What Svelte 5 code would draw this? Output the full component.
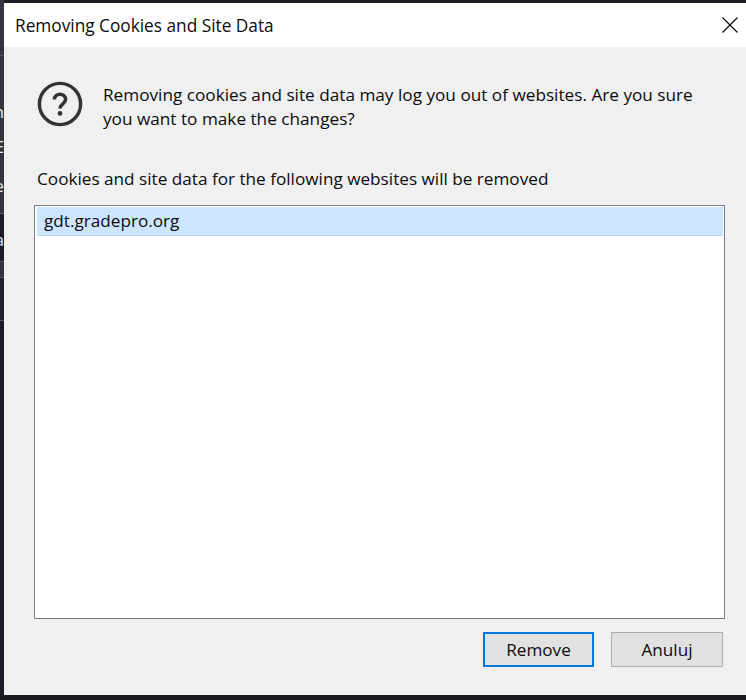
<script>
  const sites = ['gdt.gradepro.org'];
</script>

<div class="desktop">
  <div class="strip" aria-hidden="true">
    <div class="seg top"></div>
    <div class="seg mid">
      <div class="frag f1"><span>n</span></div>
      <div class="frag f2"><span>E</span></div>
      <div class="frag f3"><span>e</span></div>
    </div>
    <div class="seg dark1">
      <div class="frag f4"><span>a</span></div>
    </div>
    <div class="seg grey"></div>
    <div class="seg dark2"></div>
    <div class="seg dark3"></div>
  </div>
  <div class="dialog">
    <header class="titlebar">
      <span class="title">Removing Cookies and Site Data</span>
      <svg class="close" width="16" height="16" viewBox="0 0 16 16" aria-label="Close">
        <path d="M0.5 0.5 L15.5 15.5 M15.5 0.5 L0.5 15.5" stroke="#000" stroke-width="1.1" fill="none" />
      </svg>
    </header>
    <main class="body">
      <div class="question">
        <svg class="qicon" width="46" height="46" viewBox="0 0 46 46">
          <circle cx="23" cy="23" r="20.6" fill="none" stroke="#333" stroke-width="3.4" />
          <path d="M17.4 18.5 C17.4 11.5 28.6 11.5 28.6 18.5 C28.6 22.8 23 22.8 23 27.5" fill="none" stroke="#333" stroke-width="3.5" />
          <circle cx="23" cy="32.4" r="2.4" fill="#333" />
        </svg>
        <p>Removing cookies and site data may log you out of websites. Are you sure you want to make the changes?</p>
      </div>
      <p class="label">Cookies and site data for the following websites will be removed</p>
      <ul class="list">
        {#each sites as site}
          <li>{site}</li>
        {/each}
      </ul>
      <div class="actions">
        <button class="primary">Remove</button>
        <button>Anuluj</button>
      </div>
    </main>
  </div>
</div>

<style>
  :global(body) {
    margin: 0;
    background: #1c1b22;
  }
  .desktop {
    width: 746px;
    height: 700px;
    display: flex;
    background: #1c1b22;
    overflow: hidden;
    font-family: "Open Sans", "Noto Sans", sans-serif;
    font-size: 17.17px;
    color: #0c0c0d;
  }
  .strip {
    width: 4px;
    flex: none;
    display: flex;
    flex-direction: column;
    overflow: hidden;
    color: #e8e8ea;
  }
  .seg { flex: none; }
  .top { height: 55px; background: #35343c; border-bottom: 1px solid #56555c; }
  .mid { height: 157px; background: #35343c; border-bottom: 1px solid #56555c; }
  .dark1 { height: 47px; background: #1c1b22; }
  .grey { height: 15px; background: #35343c; border-top: 1px solid #56555c; border-bottom: 1px solid #56555c; }
  .dark2 { height: 42px; background: #232229; border-bottom: 1px solid #56555c; }
  .dark3 { flex: 1; background: #1c1b22; }
  .frag {
    height: 20px;
    line-height: 20px;
    display: flex;
    justify-content: flex-end;
  }
  .f1 { margin-top: 46px; }
  .f2 { margin-top: 15px; }
  .f3 { margin-top: 19px; }
  .f4 { margin-top: 16px; color: #cfe6fb; }
  .dialog {
    flex: none;
    width: 742px;
    height: 692px;
    margin-top: 3px;
    background: #f0f0f0;
    display: flex;
    flex-direction: column;
  }
  .titlebar {
    height: 44px;
    flex: none;
    background: #fff;
    display: flex;
    align-items: center;
    justify-content: space-between;
    padding: 1px 8px 1px 11px;
    box-sizing: border-box;
  }
  .title {
    font-size: 17.25px;
  }
  .close {
    margin-top: -1px;
  }
  .body {
    flex: 1;
    display: flex;
    flex-direction: column;
    padding: 0 21px 28px 30px;
    min-height: 0;
  }
  .question {
    display: flex;
    gap: 20px;
    margin: 34px 0 0 3px;
    align-items: flex-start;
  }
  .qicon {
    flex: none;
  }
  .question p {
    margin: 2px 0 0;
    line-height: 24px;
    width: 600px;
    font-size: 17.2px;
  }
  .label {
    margin: 36px 0 0 3px;
    line-height: 24px;
  }
  .list {
    list-style: none;
    margin: 14px 0 0;
    padding: 1px 1px 0 2px;
    height: 411px;
    box-sizing: content-box;
    background: #fff;
    border: 1px solid #7a7e85;
    flex: none;
  }
  .list li {
    height: 28px;
    background: #cce6ff;
    border-bottom: 1px solid #b5d9f7;
    box-sizing: content-box;
    padding-left: 7px;
    line-height: 27px;
  }
  .actions {
    display: flex;
    justify-content: flex-end;
    gap: 17px;
    margin-top: 13px;
    padding-right: 2px;
  }
  button {
    width: 112px;
    height: 35px;
    box-sizing: border-box;
    background: #e1e1e1;
    border: 1px solid #adadad;
    font: inherit;
    color: #0c0c0d;
    padding: 0;
  }
  .primary {
    width: 111px;
    border: 2px solid #0078d7;
  }
</style>
